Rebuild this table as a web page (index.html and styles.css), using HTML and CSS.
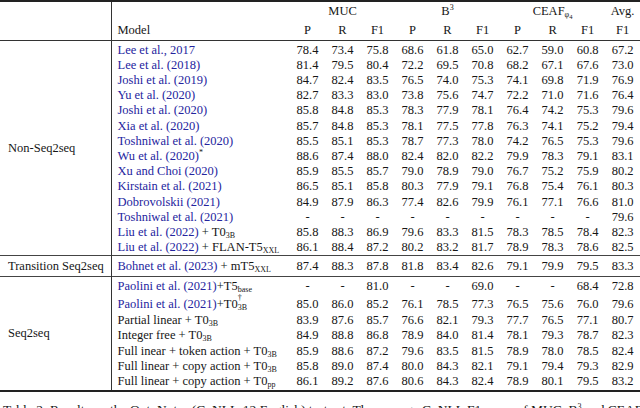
FILE: index.html
```html
<!DOCTYPE html>
<html lang="en">
<head>
<meta charset="utf-8">
<title>Results</title>
<link rel="stylesheet" href="styles.css">
</head>
<body>
<table class="results">
  <colgroup>
    <col class="c-group">
    <col class="c-model">
    <col class="c-num" span="10">
  </colgroup>
  <thead>
    <tr class="h1">
      <th class="grp"></th>
      <th class="model"></th>
      <th colspan="3">MUC</th>
      <th colspan="3">B<span class="sup">3</span></th>
      <th colspan="3">CEAF<span class="sub">φ<span class="sub2">4</span></span></th>
      <th>Avg.</th>
    </tr>
    <tr class="h2">
      <th class="grp"></th>
      <th class="model">Model</th>
      <th>P</th><th>R</th><th>F1</th>
      <th>P</th><th>R</th><th>F1</th>
      <th>P</th><th>R</th><th>F1</th>
      <th>F1</th>
    </tr>
  </thead>
  <tbody class="sec">
    <tr class="first">
      <td class="grp" rowspan="14">Non-Seq2seq</td>
      <td class="model"><span class="cite">Lee et al., 2017</span></td>
      <td>78.4</td><td>73.4</td><td>75.8</td><td>68.6</td><td>61.8</td><td>65.0</td><td>62.7</td><td>59.0</td><td>60.8</td><td>67.2</td>
    </tr>
    <tr>
      <td class="model"><span class="cite">Lee et al. (2018)</span></td>
      <td>81.4</td><td>79.5</td><td>80.4</td><td>72.2</td><td>69.5</td><td>70.8</td><td>68.2</td><td>67.1</td><td>67.6</td><td>73.0</td>
    </tr>
    <tr>
      <td class="model"><span class="cite">Joshi et al. (2019)</span></td>
      <td>84.7</td><td>82.4</td><td>83.5</td><td>76.5</td><td>74.0</td><td>75.3</td><td>74.1</td><td>69.8</td><td>71.9</td><td>76.9</td>
    </tr>
    <tr>
      <td class="model"><span class="cite">Yu et al. (2020)</span></td>
      <td>82.7</td><td>83.3</td><td>83.0</td><td>73.8</td><td>75.6</td><td>74.7</td><td>72.2</td><td>71.0</td><td>71.6</td><td>76.4</td>
    </tr>
    <tr>
      <td class="model"><span class="cite">Joshi et al. (2020)</span></td>
      <td>85.8</td><td>84.8</td><td>85.3</td><td>78.3</td><td>77.9</td><td>78.1</td><td>76.4</td><td>74.2</td><td>75.3</td><td>79.6</td>
    </tr>
    <tr>
      <td class="model"><span class="cite">Xia et al. (2020)</span></td>
      <td>85.7</td><td>84.8</td><td>85.3</td><td>78.1</td><td>77.5</td><td>77.8</td><td>76.3</td><td>74.1</td><td>75.2</td><td>79.4</td>
    </tr>
    <tr>
      <td class="model"><span class="cite">Toshniwal et al. (2020)</span></td>
      <td>85.5</td><td>85.1</td><td>85.3</td><td>78.7</td><td>77.3</td><td>78.0</td><td>74.2</td><td>76.5</td><td>75.3</td><td>79.6</td>
    </tr>
    <tr>
      <td class="model"><span class="cite">Wu et al. (2020)</span><span class="sup">*</span></td>
      <td>88.6</td><td>87.4</td><td>88.0</td><td>82.4</td><td>82.0</td><td>82.2</td><td>79.9</td><td>78.3</td><td>79.1</td><td>83.1</td>
    </tr>
    <tr>
      <td class="model"><span class="cite">Xu and Choi (2020)</span></td>
      <td>85.9</td><td>85.5</td><td>85.7</td><td>79.0</td><td>78.9</td><td>79.0</td><td>76.7</td><td>75.2</td><td>75.9</td><td>80.2</td>
    </tr>
    <tr>
      <td class="model"><span class="cite">Kirstain et al. (2021)</span></td>
      <td>86.5</td><td>85.1</td><td>85.8</td><td>80.3</td><td>77.9</td><td>79.1</td><td>76.8</td><td>75.4</td><td>76.1</td><td>80.3</td>
    </tr>
    <tr>
      <td class="model"><span class="cite">Dobrovolskii (2021)</span></td>
      <td>84.9</td><td>87.9</td><td>86.3</td><td>77.4</td><td>82.6</td><td>79.9</td><td>76.1</td><td>77.1</td><td>76.6</td><td>81.0</td>
    </tr>
    <tr>
      <td class="model"><span class="cite">Toshniwal et al. (2021)</span></td>
      <td>-</td><td>-</td><td>-</td><td>-</td><td>-</td><td>-</td><td>-</td><td>-</td><td>-</td><td>79.6</td>
    </tr>
    <tr>
      <td class="model"><span class="cite">Liu et al. (2022)</span> + T0<span class="sub">3B</span></td>
      <td>85.8</td><td>88.3</td><td>86.9</td><td>79.6</td><td>83.3</td><td>81.5</td><td>78.3</td><td>78.5</td><td>78.4</td><td>82.3</td>
    </tr>
    <tr>
      <td class="model"><span class="cite">Liu et al. (2022)</span> + FLAN-T5<span class="sub">XXL</span></td>
      <td>86.1</td><td>88.4</td><td>87.2</td><td>80.2</td><td>83.2</td><td>81.7</td><td>78.9</td><td>78.3</td><td>78.6</td><td>82.5</td>
    </tr>
  </tbody>
  <tbody class="sec">
    <tr class="trans">
      <td class="grp">Transition Seq2seq</td>
      <td class="model"><span class="cite">Bohnet et al. (2023)</span> + mT5<span class="sub">XXL</span></td>
      <td>87.4</td><td>88.3</td><td>87.8</td><td>81.8</td><td>83.4</td><td>82.6</td><td>79.1</td><td>79.9</td><td>79.5</td><td>83.3</td>
    </tr>
  </tbody>
  <tbody class="sec last">
    <tr class="p1">
      <td class="grp" rowspan="7">Seq2seq</td>
      <td class="model"><span class="cite">Paolini et al. (2021)</span>+T5<span class="sub">base</span></td>
      <td>-</td><td>-</td><td>81.0</td><td>-</td><td>-</td><td>69.0</td><td>-</td><td>-</td><td>68.4</td><td>72.8</td>
    </tr>
    <tr class="p2">
      <td class="model"><span class="cite">Paolini et al. (2021)</span>+T0<span class="sub stack">3B<span class="dag">†</span></span></td>
      <td>85.0</td><td>86.0</td><td>85.2</td><td>76.1</td><td>78.5</td><td>77.3</td><td>76.5</td><td>75.6</td><td>76.0</td><td>79.6</td>
    </tr>
    <tr>
      <td class="model">Partial linear + T0<span class="sub">3B</span></td>
      <td>83.9</td><td>87.6</td><td>85.7</td><td>76.6</td><td>82.1</td><td>79.3</td><td>77.7</td><td>76.5</td><td>77.1</td><td>80.7</td>
    </tr>
    <tr>
      <td class="model">Integer free + T0<span class="sub">3B</span></td>
      <td>84.9</td><td>88.8</td><td>86.8</td><td>78.9</td><td>84.0</td><td>81.4</td><td>78.1</td><td>79.3</td><td>78.7</td><td>82.3</td>
    </tr>
    <tr>
      <td class="model">Full inear + token action + T0<span class="sub">3B</span></td>
      <td>85.9</td><td>88.6</td><td>87.2</td><td>79.6</td><td>83.5</td><td>81.5</td><td>78.9</td><td>78.0</td><td>78.5</td><td>82.4</td>
    </tr>
    <tr>
      <td class="model">Full linear + copy action + T0<span class="sub">3B</span></td>
      <td>85.8</td><td>89.0</td><td>87.4</td><td>80.0</td><td>84.3</td><td>82.1</td><td>79.1</td><td>79.4</td><td>79.3</td><td>82.9</td>
    </tr>
    <tr>
      <td class="model">Full linear + copy action + T0<span class="sub">pp</span></td>
      <td>86.1</td><td>89.2</td><td>87.6</td><td>80.6</td><td>84.3</td><td>82.4</td><td>78.9</td><td>80.1</td><td>79.5</td><td>83.2</td>
    </tr>
  </tbody>
</table>
<p class="caption">Table 2: Results on the OntoNotes (CoNLL-12 English) test set. The average CoNLL F1 score of MUC, B<span class="sup">3</span> and CEAF<span class="sub">φ4</span> is the main evaluation metric.</p>
</body>
</html>
```
FILE: styles.css
```css
html, body {
  margin: 0;
  padding: 0;
  background: #ffffff;
}

body {
  width: 640px;
  height: 408px;
  overflow: hidden;
  font-family: "Liberation Serif", "Times New Roman", serif;
  font-size: 12.5px;
  color: #161616;
}

.results {
  width: 640px;
  border-collapse: collapse;
  table-layout: fixed;
  border-top: 2px solid #222;
  border-bottom: 2px solid #222;
}

.c-group { width: 111px; }
.c-model { width: 179px; }
.c-num { width: 35px; }

.results th,
.results td {
  padding: 0;
  text-align: center;
  font-weight: normal;
  white-space: nowrap;
  vertical-align: middle;
}

.results thead {
  border-bottom: 1px solid #333;
}

.results .h1 th { height: 18px; line-height: 18px; }
.results .h2 th { height: 20px; line-height: 20px; }

.results .grp {
  text-align: left;
  padding-left: 8px;
  border-right: 1px solid #333;
}

.results .model {
  text-align: left;
  padding-left: 6px;
}

.results tbody td {
  height: 15.2px;
  line-height: 15.2px;
}

.results tbody tr.first td { padding-top: 1.5px; }

.results tbody.sec {
  border-top: 1px solid #444;
}

.results tbody.last td { height: 15.4px; line-height: 15.4px; }

.results tr.trans td { height: 20px; }
.results tbody.last tr.p1 td { height: 17px; padding-top: 1px; }
.results tbody.last tr.p2 td { height: 14px; padding-top: 2px; }

.cite { color: #24249e; }

.sup {
  font-size: 8px;
  line-height: 0;
  vertical-align: 5px;
}

.sub {
  font-size: 8px;
  line-height: 0;
  vertical-align: -2px;
}

.sub2 {
  font-size: 6.5px;
  vertical-align: -1.5px;
}

.stack {
  position: relative;
}

.dag {
  position: absolute;
  left: 0;
  top: -9px;
  line-height: 8px;
}

.caption {
  margin: 10px 0 0 0;
  padding: 0 3px;
  font-size: 13.5px;
  line-height: 15px;
  white-space: nowrap;
}
```
